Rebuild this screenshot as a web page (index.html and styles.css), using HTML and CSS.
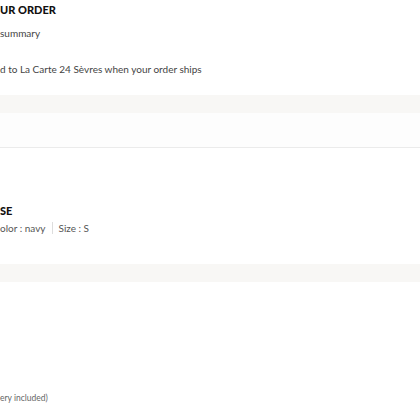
FILE: index.html
```html
<!DOCTYPE html>
<html>
<head>
<meta charset="utf-8">
<link rel="stylesheet" href="styles.css">
</head>
<body>
<div class="page">
  <section class="head">
    <h1 class="title">UR ORDER</h1>
    <p class="sub">summary</p>
    <p class="note">d to La Carte 24 Sèvres when your order ships</p>
  </section>
  <div class="band"></div>
  <div class="soft"></div>
  <section class="product">
    <h2 class="pname">SE</h2>
    <p class="attrs"><span class="attr">olor : navy</span><span class="sep"></span><span class="attr">Size : S</span></p>
  </section>
  <div class="band"></div>
  <section class="total">
    <p class="foot">ery included)</p>
  </section>
</div>
</body>
</html>
```
FILE: styles.css
```css
html, body {
  margin: 0;
  padding: 0;
  background: #ffffff;
  overflow: hidden;
}
.page {
  width: 420px;
  height: 420px;
  font-family: "Lato", "Liberation Sans", sans-serif;
  color: #222;
}
.head {
  padding-top: 4px;
  height: 95px;
  box-sizing: border-box;
}
.title {
  margin: 0;
  font-size: 11px;
  font-weight: 900;
  line-height: 12px;
  color: #111;
}
.sub {
  margin: 11px 0 0 0;
  font-size: 10px;
  line-height: 12px;
  color: #444;
}
.note {
  margin: 24px 0 0 0;
  font-size: 10px;
  line-height: 12px;
  color: #444;
}
.band {
  height: 18px;
  background: #f8f7f5;
}
.soft {
  height: 34px;
  background: #fdfdfd;
  border-bottom: 1px solid #ebebeb;
}
.product {
  height: 116px;
  padding-top: 57px;
  box-sizing: border-box;
}
.pname {
  margin: 0;
  font-size: 11px;
  line-height: 12px;
  font-weight: 900;
  color: #111;
}
.attrs {
  margin: 5px 0 0 0;
  display: flex;
  align-items: center;
  font-size: 10px;
  line-height: 12px;
  color: #555;
}
.sep {
  width: 1px;
  height: 12px;
  background: #ddd;
  margin: 0 6px;
}
.total {
  padding-top: 111px;
}
.foot {
  margin: 0;
  font-size: 8.5px;
  line-height: 10px;
  color: #666;
}
```
